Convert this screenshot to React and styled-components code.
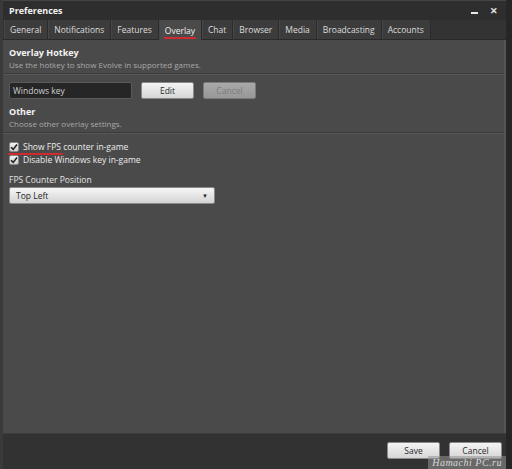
import React from "react";
import styled, { createGlobalStyle } from "styled-components";

const Global = createGlobalStyle`
  html, body { margin: 0; padding: 0; background: #262626; }
  body { font-family: "Open Sans", "Noto Sans", sans-serif; }
  #root { width: 512px; height: 469px; }
`;

const Window = styled.div`
  width: 512px;
  height: 469px;
  box-sizing: border-box;
  display: flex;
  flex-direction: column;
  background: #2f2f2f;
  border-left: 3px solid #3a3a3a;
  border-right: 6px solid #262626;
  position: relative;
  overflow: hidden;
`;

const TitleBar = styled.div`
  height: 20px;
  display: flex;
  align-items: center;
  justify-content: space-between;
  padding: 0 8px 0 6px;
  background: #2e2e2e;
  border-top: 1px solid #444;
  box-sizing: border-box;
`;

const Title = styled.div`
  color: #f2f2f2;
  font-weight: 700;
  font-size: 9px;
`;

const WinButtons = styled.div`
  display: flex;
  gap: 12px;
  align-items: center;
  color: #e8e8e8;
  font-size: 9px;
  font-weight: 700;
`;

const MinGlyph = styled.span`
  width: 7px;
  height: 2px;
  margin-top: 5px;
  background: #e8e8e8;
`;

const TabBar = styled.div`
  height: 20px;
  display: flex;
  align-items: stretch;
  padding-left: 1px;
  background: #333;
  border-bottom: 1px solid #2a2a2a;
  box-sizing: border-box;
`;

const Tab = styled.div`
  position: relative;
  display: flex;
  align-items: center;
  padding: 0 6px 0 5px;
  font-size: 8.5px;
  color: ${(p) => (p.$active ? "#f0f0f0" : "#dcdcdc")};
  background: ${(p) => (p.$active ? "#4a4a4a" : "#3c3c3c")};
  border-left: 1px solid #474747;
  border-right: 1px solid #2b2b2b;
  margin-bottom: ${(p) => (p.$active ? "-1px" : "0")};
`;

const TabMark = styled.span`
  position: absolute;
  left: 4px;
  right: 5px;
  bottom: 1px;
  height: 2px;
  background: #cf2a30;
`;

const Content = styled.div`
  flex: 1;
  background: #4a4a4a;
  padding: 6px 0 0 6px;
  display: flex;
  flex-direction: column;
  border-right: 2px solid #555;
`;

const SectionTitle = styled.div`
  color: #f4f4f4;
  font-weight: 700;
  font-size: 9px;
  line-height: 13px;
`;

const SectionSub = styled.div`
  color: #a9a9a9;
  font-size: 8px;
  line-height: 12px;
`;

const Divider = styled.div`
  height: 1px;
  background: #3a3a3a;
  border-bottom: 1px solid #585858;
  margin: 2px 0 0 -6px;
`;

const HotkeyRow = styled.div`
  display: flex;
  align-items: center;
  gap: 9px;
  margin: 7px 0 6px 0;
`;

const Input = styled.div`
  width: 123px;
  height: 17px;
  box-sizing: border-box;
  background: #262626;
  border: 1px solid #5a5a5a;
  border-radius: 2px;
  color: #cfcfcf;
  font-size: 8.5px;
  display: flex;
  align-items: center;
  padding-left: 3px;
`;

const Button = styled.div`
  width: ${(p) => p.$w || 53}px;
  height: 17px;
  box-sizing: border-box;
  border-radius: 2px;
  border: 1px solid ${(p) => (p.$disabled ? "#7a7a7a" : "#8a8a8a")};
  background: ${(p) =>
    p.$disabled
      ? "linear-gradient(#a9a9a9, #989898)"
      : "linear-gradient(#f4f4f4, #d6d6d6)"};
  color: ${(p) => (p.$disabled ? "#7c7c7c" : "#2a2a2a")};
  font-size: 8.5px;
  display: flex;
  align-items: center;
  justify-content: center;
`;

const CheckList = styled.div`
  display: flex;
  flex-direction: column;
  gap: 2px;
  margin: 7px 0 0 0;
`;

const CheckRow = styled.div`
  position: relative;
  display: flex;
  align-items: center;
  gap: 4px;
  height: 11px;
  color: #ececec;
  font-size: 8.5px;
`;

const Box = styled.span`
  width: 10px;
  height: 10px;
  box-sizing: border-box;
  border-radius: 2px;
  background: linear-gradient(#f2f2f2, #cfcfcf);
  border: 1px solid #8a8a8a;
  display: flex;
  align-items: center;
  justify-content: center;
`;

const RedMark = styled.span`
  position: absolute;
  left: -1px;
  width: 55px;
  bottom: -3px;
  height: 2px;
  background: #cf2a30;
  border-radius: 1px;
`;

const FieldLabel = styled.div`
  color: #e4e4e4;
  font-size: 8.5px;
  margin: 9px 0 0 0;
  line-height: 11px;
`;

const Select = styled.div`
  width: 206px;
  height: 17px;
  box-sizing: border-box;
  margin: 2px 0 0 0;
  border-radius: 2px;
  border: 1px solid #8a8a8a;
  background: linear-gradient(#f6f6f6, #d4d4d4);
  display: flex;
  align-items: center;
  justify-content: space-between;
  padding: 0 6px 0 6px;
  color: #262626;
  font-size: 8.5px;
`;

const Footer = styled.div`
  height: 36px;
  background: #323232;
  border-top: 1px solid #3c3c3c;
  display: flex;
  align-items: center;
  justify-content: flex-end;
  gap: 9px;
  padding: 0 4px 3px 0;
  box-sizing: border-box;
`;

const Watermark = styled.div`
  position: absolute;
  right: 0;
  bottom: 0;
  padding: 1px 4px 0 4px;
  background: rgba(150, 150, 150, 0.55);
  color: #d8d8d8;
  font-family: "Liberation Serif", serif;
  font-style: italic;
  font-size: 10px;
  letter-spacing: 0.5px;
  line-height: 12px;
`;

const Check = () => (
  <svg width="8" height="8" viewBox="0 0 8 8">
    <path d="M1 4.2 L3.2 6.4 L7 1.4" fill="none" stroke="#222" strokeWidth="1.6" />
  </svg>
);

const tabs = ["General", "Notifications", "Features", "Overlay", "Chat", "Browser", "Media", "Broadcasting", "Accounts"];

export default function App() {
  return (
    <>
      <Global />
      <Window>
        <TitleBar>
          <Title>Preferences</Title>
          <WinButtons>
            <MinGlyph />
            <span>✕</span>
          </WinButtons>
        </TitleBar>
        <TabBar>
          {tabs.map((t) => (
            <Tab key={t} $active={t === "Overlay"}>
              {t}
              {t === "Overlay" && <TabMark />}
            </Tab>
          ))}
        </TabBar>
        <Content>
          <SectionTitle>Overlay Hotkey</SectionTitle>
          <SectionSub>Use the hotkey to show Evolve in supported games.</SectionSub>
          <Divider />
          <HotkeyRow>
            <Input>Windows key</Input>
            <Button>Edit</Button>
            <Button $disabled>Cancel</Button>
          </HotkeyRow>
          <SectionTitle>Other</SectionTitle>
          <SectionSub>Choose other overlay settings.</SectionSub>
          <Divider />
          <CheckList>
            <CheckRow>
              <Box><Check /></Box>
              Show FPS counter in-game
              <RedMark />
            </CheckRow>
            <CheckRow>
              <Box><Check /></Box>
              Disable Windows key in-game
            </CheckRow>
          </CheckList>
          <FieldLabel>FPS Counter Position</FieldLabel>
          <Select>
            <span>Top Left</span>
            <span style={{ fontSize: "6px" }}>▼</span>
          </Select>
        </Content>
        <Footer>
          <Button>Save</Button>
          <Button>Cancel</Button>
        </Footer>
        <Watermark>Hamachi PC.ru</Watermark>
      </Window>
    </>
  );
}
